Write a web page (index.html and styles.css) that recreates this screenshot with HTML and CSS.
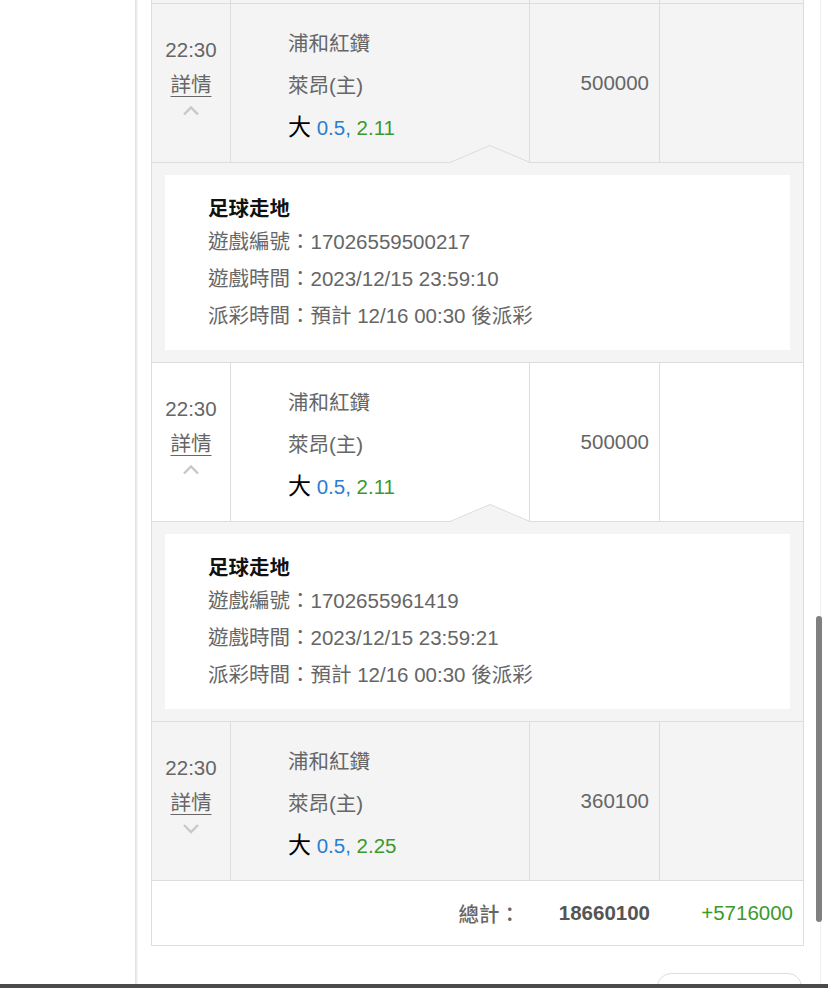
FILE: index.html
```html
<!DOCTYPE html>
<html lang="zh-Hant">
<head>
<meta charset="utf-8">
<title>注單</title>
<link rel="stylesheet" href="styles.css">
</head>
<body>
<div class="page">
  <aside class="side"></aside>
  <div class="divider"></div>
  <main class="main">
    <section class="table">
      <div class="row stub">
        <div class="cell"></div><div class="cell"></div><div class="cell"></div><div class="cell"></div>
      </div>

      <div class="row gray">
        <div class="cell time">
          <div class="hm">22:30</div>
          <a class="more">詳情</a>
          <svg class="chev" width="18" height="11" viewBox="0 0 18 11"><polyline points="2,9.5 9,2.5 16,9.5" fill="none" stroke="#c8c8c8" stroke-width="2.4"/></svg>
        </div>
        <div class="cell match">
          <div class="line">浦和紅鑽</div>
          <div class="line">萊昂(主)</div>
          <div class="line"><span class="big">大</span> <span class="hcp">0.5,</span> <span class="odds">2.11</span></div>
        </div>
        <div class="cell amount">500000</div>
        <div class="cell result"></div>
      </div>
      <div class="detail">
        <svg class="notch" width="80" height="18" viewBox="0 0 80 18"><polygon points="0,18 40,0.5 80,18" fill="#f4f4f4"/><polyline points="0,17.5 40,0.5 80,17.5" fill="none" stroke="#dcdcdc" stroke-width="1"/></svg>
        <div class="card">
          <div class="title">足球走地</div>
          <div class="info">遊戲編號：17026559500217</div>
          <div class="info">遊戲時間：2023/12/15 23:59:10</div>
          <div class="info">派彩時間：預計 12/16 00:30 後派彩</div>
        </div>
      </div>

      <div class="row white">
        <div class="cell time">
          <div class="hm">22:30</div>
          <a class="more">詳情</a>
          <svg class="chev" width="18" height="11" viewBox="0 0 18 11"><polyline points="2,9.5 9,2.5 16,9.5" fill="none" stroke="#c8c8c8" stroke-width="2.4"/></svg>
        </div>
        <div class="cell match">
          <div class="line">浦和紅鑽</div>
          <div class="line">萊昂(主)</div>
          <div class="line"><span class="big">大</span> <span class="hcp">0.5,</span> <span class="odds">2.11</span></div>
        </div>
        <div class="cell amount">500000</div>
        <div class="cell result"></div>
      </div>
      <div class="detail">
        <svg class="notch" width="80" height="18" viewBox="0 0 80 18"><polygon points="0,18 40,0.5 80,18" fill="#f4f4f4"/><polyline points="0,17.5 40,0.5 80,17.5" fill="none" stroke="#dcdcdc" stroke-width="1"/></svg>
        <div class="card">
          <div class="title">足球走地</div>
          <div class="info">遊戲編號：1702655961419</div>
          <div class="info">遊戲時間：2023/12/15 23:59:21</div>
          <div class="info">派彩時間：預計 12/16 00:30 後派彩</div>
        </div>
      </div>

      <div class="row gray">
        <div class="cell time">
          <div class="hm">22:30</div>
          <a class="more">詳情</a>
          <svg class="chev" width="18" height="11" viewBox="0 0 18 11"><polyline points="2,2 9,9 16,2" fill="none" stroke="#c8c8c8" stroke-width="2.4"/></svg>
        </div>
        <div class="cell match">
          <div class="line">浦和紅鑽</div>
          <div class="line">萊昂(主)</div>
          <div class="line"><span class="big">大</span> <span class="hcp">0.5,</span> <span class="odds">2.25</span></div>
        </div>
        <div class="cell amount">360100</div>
        <div class="cell result"></div>
      </div>

      <div class="row total">
        <div class="cell"></div>
        <div class="cell label">總計：</div>
        <div class="cell sum">18660100</div>
        <div class="cell win">+5716000</div>
      </div>
    </section>
    <div class="actions">
      <button class="btn" type="button"></button>
    </div>
    <div class="scrollbar"></div>
  </main>
</div>
<div class="bottombar"></div>
</body>
</html>
```

FILE: styles.css
```css
html, body {
  margin: 0;
  padding: 0;
  background: #ffffff;
}
body {
  height: 988px;
  overflow: hidden;
  font-family: "Liberation Sans", "Noto Sans CJK TC", sans-serif;
  color: #666666;
  font-size: 20.5px;
}
.page {
  display: flex;
  height: 988px;
}
.side {
  width: 135px;
  flex: none;
  background: #ffffff;
}
.divider {
  width: 3px;
  flex: none;
  background: linear-gradient(to right, #dedede, #efefef 60%, #f8f8f8);
}
.main {
  position: relative;
  width: 669px;
  flex: none;
  padding-left: 13px;
  border-right: 1px solid #f1f1f1;
  background: #ffffff;
}
.table {
  width: 653px;
  box-sizing: border-box;
  border-left: 1px solid #dddddd;
  border-right: 1px solid #dddddd;
  border-bottom: 1px solid #dddddd;
}
.row {
  display: grid;
  grid-template-columns: 79px 299px 130px 143px;
  border-top: 1px solid #dddddd;
}
.row.stub {
  border-top: none;
  height: 3px;
  background: #f4f4f4;
}
.row.gray { background: #f4f4f4; }
.row.white { background: #ffffff; }
.cell {
  box-sizing: border-box;
  border-right: 1px solid #dddddd;
}
.cell:last-child { border-right: none; }
.time {
  display: flex;
  flex-direction: column;
  align-items: center;
  padding-top: 28px;
  line-height: 35px;
  color: #666666;
}
.more {
  color: #666666;
  text-decoration: underline;
  text-underline-offset: 4px;
  text-decoration-thickness: 1px;
}
.chev {
  display: block;
  margin-top: 3px;
}
.match {
  height: 158px;
  box-sizing: border-box;
  padding: 19px 0 0 57px;
  line-height: 42px;
  color: #666666;
}
.line {
  height: 42px;
}
.big {
  color: #000000;
  font-size: 23px;
  line-height: 20px;
}
.hcp { color: #2b7dd1; }
.odds { color: #3a9a2e; }
.amount {
  display: flex;
  align-items: center;
  justify-content: flex-end;
  padding-right: 10px;
  color: #666666;
}
.detail {
  position: relative;
  border-top: 1px solid #dddddd;
  background: #f4f4f4;
  padding: 12px 13px;
}
.notch {
  position: absolute;
  top: -18px;
  left: 298px;
  display: block;
}
.card {
  background: #ffffff;
  height: 175px;
  box-sizing: border-box;
  padding: 20px 0 0 43px;
}
.title {
  color: #111111;
  font-weight: 700;
  line-height: 28px;
}
.info {
  line-height: 37px;
  color: #666666;
}
.row.total {
  height: 64px;
  background: #ffffff;
}
.row.total .cell {
  border-right: none;
  display: flex;
  align-items: center;
  justify-content: flex-end;
  padding-right: 10px;
}
.row.total .cell:first-child { padding-right: 0; }
.label {
  font-weight: 500;
  color: #666666;
}
.sum {
  font-weight: 700;
  color: #555555;
}
.win {
  color: #3a9a2e;
}
.actions {
  display: flex;
  justify-content: flex-end;
  width: 651px;
  padding-top: 27px;
}
.btn {
  width: 145px;
  height: 40px;
  border: 1px solid #dddddd;
  border-radius: 14px;
  background: #ffffff;
  padding: 0;
}
.scrollbar {
  position: absolute;
  left: 678px;
  top: 616px;
  width: 6px;
  height: 306px;
  border-radius: 3px;
  background: #808080;
}
.bottombar {
  position: fixed;
  left: 0;
  right: 0;
  bottom: 0;
  height: 4px;
  background: #4a4a4a;
}
```
